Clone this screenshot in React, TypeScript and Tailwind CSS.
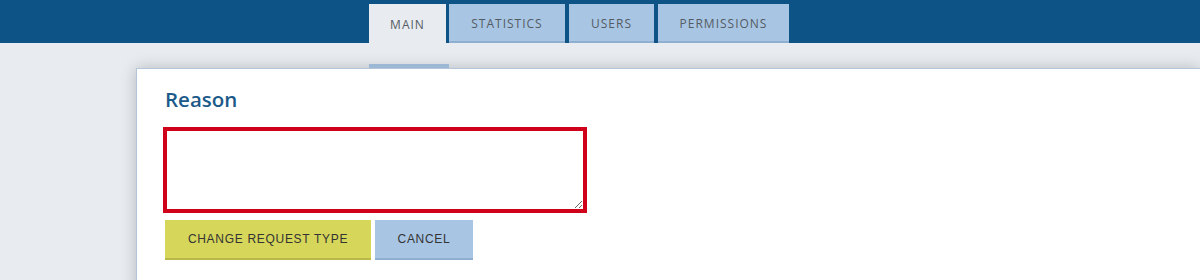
import React from 'react';

const tabs = [
  { label: 'MAIN', cls: 'w-[77px]', active: true },
  { label: 'STATISTICS', cls: 'w-[116px]', active: false },
  { label: 'USERS', cls: 'ml-[1px] w-[85px]', active: false },
  { label: 'PERMISSIONS', cls: 'ml-[1px] w-[131px]', active: false },
];

export default function App() {
  return (
    <div className="h-[280px] w-full overflow-hidden bg-[#e8ecf0] font-['Liberation_Sans',Arial,sans-serif]">
      {/* top bar with tabs */}
      <div className="flex h-[43px] items-end gap-[3px] bg-[#0d5385] pl-[369px] font-['Open_Sans',sans-serif]">
        {tabs.map((tab) => (
          <div
            key={tab.label}
            className={
              tab.active
                ? `flex h-[39px] ${tab.cls} items-center justify-center bg-[#e8ecf0] pt-[2px] text-[12px] tracking-[1px] text-[#555b63]`
                : `flex h-[39px] ${tab.cls} items-center justify-center border-b-2 border-[#8eafd0] bg-[#a8c6e3] pt-[2px] text-[12px] tracking-[1px] text-[#555b63]`
            }
          >
            {tab.label}
          </div>
        ))}
      </div>

      {/* space between bar and panel */}
      <div className="flex h-[25px] flex-col justify-end">
        <div className="ml-[369px] h-[4px] w-[80px] bg-[#9db8d4]" />
      </div>

      {/* panel */}
      <div className="ml-[136px] h-[240px] border-l border-t border-[#b4c7da] bg-white pl-[28px] pt-[17px] shadow-[0_0_14px_rgba(0,0,0,0.22)]">
        <h2 className="font-['Open_Sans',sans-serif] text-[20.5px] font-semibold leading-[26px] text-[#1c5a8a]">Reason</h2>
        <textarea className="-ml-[2px] mt-[15px] block h-[86px] w-[424px] resize-y border-4 border-[#d0021b] bg-white outline-none" />
        <div className="mt-[7px] flex gap-[4px]">
          <button className="h-[40px] w-[206px] border-b-2 border-[#b9b94a] bg-[#d6d65a] text-[12px] tracking-[0.7px] text-[#333333]">
            CHANGE REQUEST TYPE
          </button>
          <button className="h-[40px] w-[98px] border-b-2 border-[#8eafd0] bg-[#a8c6e3] text-[12px] tracking-[0.7px] text-[#333333]">
            CANCEL
          </button>
        </div>
      </div>
    </div>
  );
}
